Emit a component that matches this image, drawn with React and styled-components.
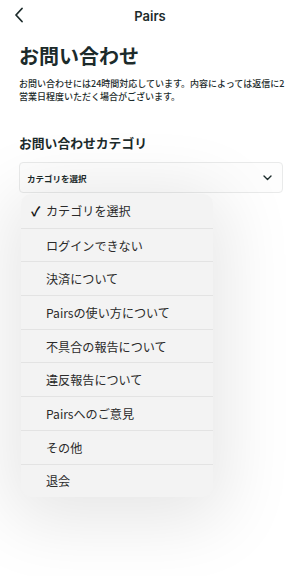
import React from 'react';
import styled, { createGlobalStyle } from 'styled-components';

const categories = [
  'カテゴリを選択',
  'ログインできない',
  '決済について',
  'Pairsの使い方について',
  '不具合の報告について',
  '違反報告について',
  'Pairsへのご意見',
  'その他',
  '退会',
];

const GlobalStyle = createGlobalStyle`
  html, body {
    margin: 0;
    padding: 0;
    background: #ffffff;
  }
  body {
    font-family: "Noto Sans CJK JP", "Noto Sans", sans-serif;
    color: #1c2b2b;
  }
`;

const App = () => {
  return (
    <Page>
      <GlobalStyle />
      <NavBar>
        <BackButton aria-label="戻る">
          <svg width="10" height="16" viewBox="0 0 10 16" fill="none">
            <path d="M8 1.5L2 8l6 6.5" stroke="#1c2b2b" strokeWidth="1.8" strokeLinecap="round" strokeLinejoin="round" />
          </svg>
        </BackButton>
        <NavTitle>Pairs</NavTitle>
      </NavBar>

      <Content>
        <Heading>お問い合わせ</Heading>
        <Description>
          お問い合わせには24時間対応しています。内容によっては返信に2営業日程度いただく場合がございます。
        </Description>

        <SectionTitle>お問い合わせカテゴリ</SectionTitle>
        <SelectWrap>
          <SelectBox>
            <span>カテゴリを選択</span>
            <svg width="9" height="6" viewBox="0 0 9 6" fill="none">
              <path d="M1 1l3.5 3.5L8 1" stroke="#1c2b2b" strokeWidth="1.4" strokeLinecap="round" strokeLinejoin="round" />
            </svg>
          </SelectBox>
          <Menu>
            {categories.map((item, i) => (
              <MenuItem key={item} $first={i === 0}>
                <Check>{i === 0 ? '✓' : ''}</Check>
                {item}
              </MenuItem>
            ))}
          </Menu>
        </SelectWrap>
      </Content>
    </Page>
  );
};

export default App;

const Page = styled.div`
  width: 300px;
  height: 576px;
  overflow: hidden;
  background: #ffffff;
`;

const NavBar = styled.header`
  height: 31px;
  display: flex;
  align-items: center;
  justify-content: center;
  position: relative;
`;

const BackButton = styled.button`
  position: absolute;
  left: 14px;
  top: 7px;
  border: 0;
  background: none;
  padding: 0;
  display: flex;
`;

const NavTitle = styled.h1`
  margin: 0;
  font-family: "Inter", "Noto Sans", sans-serif;
  font-size: 13px;
  font-weight: 600;
  color: #1c2b2b;
`;

const Content = styled.main`
  padding: 12px 17px 0 19px;
`;

const Heading = styled.h2`
  margin: 0;
  font-size: 20px;
  font-weight: 700;
  line-height: 26px;
  color: #1c2b2b;
`;

const Description = styled.p`
  margin: 9px -6px 0 0;
  max-width: 266px;
  font-size: 9px;
  font-weight: 500;
  line-height: 12.5px;
  color: #1c2b2b;
`;

const SectionTitle = styled.h3`
  margin: 30px 0 0;
  font-size: 12.8px;
  font-weight: 700;
  line-height: 20px;
  color: #1c2b2b;
`;

const SelectWrap = styled.div`
  margin-top: 9px;
  position: relative;
`;

const SelectBox = styled.div`
  height: 31px;
  box-sizing: border-box;
  border: 1px solid #e9eaea;
  border-radius: 4px;
  background: #fdfdfd;
  display: flex;
  align-items: center;
  justify-content: space-between;
  padding: 0 10px 0 7px;
  font-size: 8.5px;
  font-weight: 700;
  color: #1c2b2b;
`;

const Menu = styled.ul`
  position: absolute;
  top: 32px;
  left: 2px;
  width: 192px;
  margin: 0;
  padding: 0;
  list-style: none;
  background: #f3f3f3;
  border-radius: 10px;
  box-shadow: 0 12px 70px 12px rgba(0, 0, 0, 0.1);
  overflow: hidden;
`;

const MenuItem = styled.li`
  height: 33.7px;
  box-sizing: border-box;
  display: flex;
  align-items: center;
  padding-left: 10px;
  font-size: 12.1px;
  color: #2a2a2a;
  border-top: ${(p) => (p.$first ? 'none' : '1px solid #e3e3e3')};
`;

const Check = styled.span`
  width: 15px;
  font-size: 13px;
  font-weight: 700;
  color: #111;
`;
